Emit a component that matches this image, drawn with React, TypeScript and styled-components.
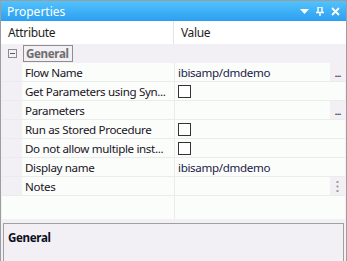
import React from 'react';
import styled, {createGlobalStyle} from 'styled-components';

const GlobalStyle = createGlobalStyle`
    html, body {
        margin: 0;
        padding: 0;
        background: #ffffff;
    }
    body {
        font-family: "Noto Sans", "DejaVu Sans", sans-serif;
        font-size: 11.6px;
        letter-spacing: -0.35px;
    }
`

const Window = styled.div`
    width: 347px;
    height: 261px;
    box-sizing: border-box;
    border: 1px solid #9d9d9d;
    border-bottom: none;
    background: #f2f0f4;
    display: flex;
    flex-direction: column;
    overflow: hidden;
`

const TitleBar = styled.div`
    height: 20px;
    flex: none;
    display: flex;
    align-items: center;
    padding: 0 6px 0 6px;
    background: linear-gradient(#52c2fc, #2c9ff1);
    color: #ffffff;
    font-size: 12px;
    letter-spacing: 0;
`

const Title = styled.span`
    flex: 1;
`

const TitleIcons = styled.div`
    display: flex;
    align-items: center;
    gap: 7px;
`

const HeaderRow = styled.div`
    height: 23px;
    flex: none;
    display: grid;
    grid-template-columns: 173px 1fr;
    background: #ffffff;
    color: #1e1e1e;
    font-size: 12px;
`

const HeaderCell = styled.div<{$divider?: boolean}>`
    display: flex;
    align-items: center;
    padding-left: 7px;
    border-right: ${({$divider}) => ($divider ? '1px solid #e4e4e4' : 'none')};
`

const Grid = styled.div`
    flex: none;
    margin: 0 1px 0 1px;
    display: flex;
    flex-direction: column;
`

const Row = styled.div`
    height: 19px;
    display: grid;
    grid-template-columns: 20px 152px 1px 1fr 15px;
    border-bottom: 1px solid #ebebeb;
    box-sizing: border-box;
`

const GroupRow = styled.div`
    height: 19px;
    display: flex;
    align-items: center;
    box-sizing: border-box;
`

const Expander = styled.div`
    width: 7px;
    height: 7px;
    border: 1px solid #8c8c8c;
    margin: 0 6px 0 6px;
    position: relative;
    &::after {
        content: '';
        position: absolute;
        left: 1px;
        top: 3px;
        width: 5px;
        height: 1px;
        background: #5a5a5a;
    }
`

const GroupLabel = styled.div`
    border: 1px solid #8e8e8e;
    height: 15px;
    display: flex;
    align-items: center;
    padding: 0 3px 0 2px;
    font-weight: bold;
    color: #6e6e6e;
`

const Gutter = styled.div`
    background: #f2f0f4;
`

const NameCell = styled.div`
    background: #fbfdfb;
    display: flex;
    align-items: center;
    padding-left: 3px;
    white-space: nowrap;
    overflow: hidden;
    color: #20141e;
`

const Divider = styled.div`
    background: #ebebeb;
`

const ValueCell = styled.div`
    background: #fbfdfb;
    display: flex;
    align-items: center;
    padding-left: 3px;
    color: #1b1b48;
`

const ButtonCell = styled.div<{$plain?: boolean}>`
    background: ${({$plain}) => ($plain ? '#fbfdfb' : '#f2f0f4')};
    display: flex;
    align-items: center;
    justify-content: center;
    color: #101030;
    font-size: 11px;
    letter-spacing: -1px;
`

const Check = styled.div`
    width: 11px;
    height: 11px;
    border: 1px solid #333333;
    background: #ffffff;
`

const Filler = styled.div`
    height: 23px;
    display: grid;
    grid-template-columns: 172px 1px 1fr;
    background: #fbfdfb;
`

const Description = styled.div`
    flex: 1;
    margin: 4px 2px 0 2px;
    border: 1px solid #a0a0a0;
    border-bottom: none;
    padding: 6px 4px;
    font-weight: bold;
    color: #0e0e1e;
`

type Prop = {
    name: string;
    value?: string;
    check?: boolean;
    button?: 'dots' | 'more';
};

const PROPS: Prop[] = [
    {name: 'Flow Name', value: 'ibisamp/dmdemo', button: 'dots'},
    {name: 'Get Parameters using Syn...', check: true},
    {name: 'Parameters', button: 'dots'},
    {name: 'Run as Stored Procedure', check: true},
    {name: 'Do not allow multiple inst...', check: true},
    {name: 'Display name', value: 'ibisamp/dmdemo'},
    {name: 'Notes', button: 'more'},
];

const App: React.FC = () => {
    return (
        <>
            <GlobalStyle/>
            <Window>
                <TitleBar>
                    <Title>Properties</Title>
                    <TitleIcons>
                        <svg width="9" height="5" viewBox="0 0 9 5">
                            <path d="M0 0H9L4.5 5Z" fill="#fff"/>
                        </svg>
                        <svg width="8" height="9" viewBox="0 0 8 9">
                            <path d="M2 0V5M2 0H6V5M0 5.5H8M4 5.5V9" stroke="#fff" strokeWidth="1.4" fill="none"/>
                        </svg>
                        <svg width="9" height="9" viewBox="0 0 9 9">
                            <path d="M1 1L8 8M8 1L1 8" stroke="#fff" strokeWidth="1.8"/>
                        </svg>
                    </TitleIcons>
                </TitleBar>
                <HeaderRow>
                    <HeaderCell $divider>Attribute</HeaderCell>
                    <HeaderCell>Value</HeaderCell>
                </HeaderRow>
                <Grid>
                    <GroupRow>
                        <Expander/>
                        <GroupLabel>General</GroupLabel>
                    </GroupRow>
                    {PROPS.map(p => (
                        <Row key={p.name}>
                            <Gutter/>
                            <NameCell>{p.name}</NameCell>
                            <Divider/>
                            <ValueCell>
                                {p.check ? <Check/> : p.value}
                            </ValueCell>
                            <ButtonCell $plain={!p.button}>
                                {p.button === 'dots' && '...'}
                                {p.button === 'more' && (
                                    <svg width="3" height="11" viewBox="0 0 3 11">
                                        <rect x="0.5" y="0" width="2" height="2" fill="#9a9a9a"/>
                                        <rect x="0.5" y="4.5" width="2" height="2" fill="#9a9a9a"/>
                                        <rect x="0.5" y="9" width="2" height="2" fill="#9a9a9a"/>
                                    </svg>
                                )}
                            </ButtonCell>
                        </Row>
                    ))}
                    <Filler>
                        <div/>
                        <Divider/>
                        <div/>
                    </Filler>
                </Grid>
                <Description>General</Description>
            </Window>
        </>
    );
};

export default App;
